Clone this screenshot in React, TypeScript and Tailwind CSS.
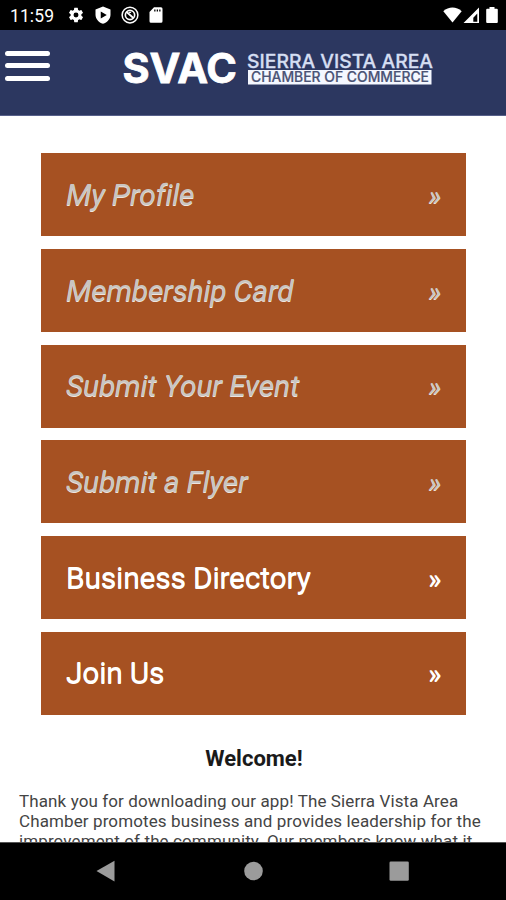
type Item = { label: string; locked: boolean; spacing: string };

const items: Item[] = [
  { label: "My Profile", locked: true, spacing: "tracking-[-0.25px]" },
  { label: "Membership Card", locked: true, spacing: "tracking-[-0.2px]" },
  { label: "Submit Your Event", locked: true, spacing: "tracking-[-0.2px]" },
  { label: "Submit a Flyer", locked: true, spacing: "tracking-[-0.2px]" },
  { label: "Business Directory", locked: false, spacing: "tracking-[-0.22px]" },
  { label: "Join Us", locked: false, spacing: "tracking-[-0.25px]" },
];

function StatusBar() {
  return (
    <div className="flex h-[30px] shrink-0 items-center bg-black text-white">
      <span className="ml-[10px] w-[46px] pt-px text-[17.5px] leading-[30px] tracking-[0.1px]">11:59</span>
      <svg className="ml-[11px] h-[18px] w-[18px]" viewBox="0 0 24 24" fill="#fff">
        <path d="M19.14 12.94c.04-.3.06-.61.06-.94s-.02-.64-.07-.94l2.03-1.58a.49.49 0 0 0 .12-.61l-1.92-3.32a.49.49 0 0 0-.59-.22l-2.39.96a7 7 0 0 0-1.62-.94l-.36-2.54a.48.48 0 0 0-.48-.41h-3.84a.47.47 0 0 0-.47.41l-.36 2.54c-.59.24-1.13.57-1.62.94l-2.39-.96a.48.48 0 0 0-.59.22L2.74 8.87a.47.47 0 0 0 .12.61l2.03 1.58a7.300 7.300 0 0 0 0 1.880l-2.030 1.580a.49.49 0 0 0-.12.61l1.920 3.320c.12.22.37.29.59.22l2.390-.96c.5.38 1.030.7 1.620.94l.36 2.540c.05.24.24.41.48.41h3.840c.24 0 .44-.17.47-.41l.36-2.540a7 7 0 0 0 1.620-.94l2.390.96c.22.08.47 0 .59-.22l1.920-3.320a.47.47 0 0 0-.12-.61zM12 15.300a3.300 3.300 0 1 1 0-6.600 3.300 3.300 0 0 1 0 6.600z" />
      </svg>
      <svg className="ml-[9px] h-[18px] w-[18px]" viewBox="0 0 24 24" fill="#fff">
        <path fillRule="evenodd" d="M12 .8 2 4.500v7c0 5.600 4.200 10.300 10 12 5.800-1.700 10-6.400 10-12v-7zM9 7.300l8 4.700-8 4.700z" />
      </svg>
      <svg className="ml-[9px] h-[18px] w-[18px]" viewBox="0 0 24 24" fill="none" stroke="#fff">
        <circle cx="12" cy="12" r="10.500" strokeWidth="2" />
        <circle cx="12" cy="12" r="6.200" strokeWidth="2.200" />
        <path d="m7.500 8 9 8" strokeWidth="2.400" />
        <path d="M10.500 8.500h3" strokeWidth="1.500" />
      </svg>
      <svg className="ml-[10px] h-[16px] w-[14px]" viewBox="0 0 14 16" fill="#fff">
        <path fillRule="evenodd" d="M5 .3h7a1.500 1.500 0 0 1 1.500 1.500v12.400a1.500 1.500 0 0 1-1.500 1.500H2a1.500 1.500 0 0 1-1.500-1.500V5zM5.200 2.500v2h1.300v-2zm2.500 0v2H9v-2zm2.500 0v2h1.300v-2z" />
      </svg>
      <svg className="mr-[8px] ml-auto h-[18px] w-[56px]" viewBox="0 0 56 18" fill="#fff">
        <path d="M10.500 16.500 1.300 5.200C6.500.2 14.500.2 19.700 5.200z" />
        <path fillRule="evenodd" d="M37 1.500V17H21.500zM35.300 7.500l-4 4.200v4h4z" />
        <path d="M47.500 1h5v1.800h2.300a1 1 0 0 1 1 1V16a1 1 0 0 1-1 1h-9.600a1 1 0 0 1-1-1V3.800a1 1 0 0 1 1-1h2.300z" />
      </svg>
    </div>
  );
}

function Header() {
  return (
    <header className="flex h-[86px] shrink-0 items-start border-b border-[#57608a] bg-[#2c3760]">
      <button aria-label="Menu" className="mt-[20.500px] ml-[5px] flex w-[45px] flex-col gap-[7.500px]">
        <span className="h-[5px] rounded-full bg-white" />
        <span className="h-[5px] rounded-full bg-white" />
        <span className="h-[5px] rounded-full bg-white" />
      </button>
      <svg className="mt-[12px] ml-[68px] h-[52px] w-[320px]" viewBox="0 0 320 52" fontFamily="Inter, 'Liberation Sans', sans-serif">
        <text x="4.500" y="40.500" fontSize="40.500" fontWeight="700" textLength="114.500" lengthAdjust="spacingAndGlyphs" fill="#fff" stroke="#fff" strokeWidth="0.800">SVAC</text>
        <text x="129" y="25.500" fontSize="19" fontWeight="500" textLength="186" lengthAdjust="spacingAndGlyphs" fill="#d5def2" stroke="#d5def2" strokeWidth="0.300">SIERRA VISTA AREA</text>
        <rect x="130" y="28" width="183.500" height="14.500" fill="#f4f7ff" />
        <text x="133" y="40.300" fontSize="14" fontWeight="500" textLength="178" lengthAdjust="spacingAndGlyphs" fill="#4b5375" stroke="#4b5375" strokeWidth="0.200">CHAMBER OF COMMERCE</text>
      </svg>
    </header>
  );
}

function MenuButton({ item }: { item: Item }) {
  const tone = item.locked
    ? "italic text-[#c9c5c1] [text-shadow:0_1px_0_#eee5df]"
    : "text-white [text-shadow:0_1px_0_#fff]";
  return (
    <button className={`flex h-[83px] w-full shrink-0 items-center justify-between bg-[#a65122] pr-[25px] pl-[25px] text-left text-[30px] leading-[36px] ${tone}`}>
      <span className={`whitespace-nowrap ${item.spacing}`}>{item.label}</span>
      <span className="pt-[2px] text-[28px]">»</span>
    </button>
  );
}

function NavBar() {
  return (
    <nav className="flex h-[58px] shrink-0 justify-center border-t border-[#555] bg-black">
      <svg className="h-[57px] w-[506px]" viewBox="0 0 506 57" fill="#9b9b9b">
        <path d="M96.500 28 114.500 17.700v20.800z" />
        <circle cx="253.500" cy="28" r="9.300" />
        <rect x="389.500" y="18.500" width="19.300" height="19.300" rx="1.300" />
      </svg>
    </nav>
  );
}

export default function App() {
  return (
    <div className="flex h-[900px] w-[506px] flex-col overflow-hidden bg-white font-[Roboto,'Liberation_Sans',sans-serif]">
      <StatusBar />
      <Header />
      <main className="flex min-h-0 flex-1 flex-col overflow-hidden">
        <div className="mt-[37.400px] ml-[41px] flex w-[425.400px] shrink-0 flex-col gap-[12.700px]">
          {items.map((item) => (
            <MenuButton key={item.label} item={item} />
          ))}
        </div>
        <h1 className="mt-[30.500px] shrink-0 pl-[2px] text-center text-[22px] leading-[28px] font-bold text-[#1a1a1a]">Welcome!</h1>
        <p className="mt-[18px] ml-[19px] shrink-0 text-[17px] leading-[20px] tracking-[0.11px] whitespace-nowrap text-[#444]">
          Thank you for downloading our app! The Sierra Vista Area
          <br />
          Chamber promotes business and provides leadership for the
          <br />
          improvement of the community. Our members know what it
        </p>
      </main>
      <NavBar />
    </div>
  );
}
